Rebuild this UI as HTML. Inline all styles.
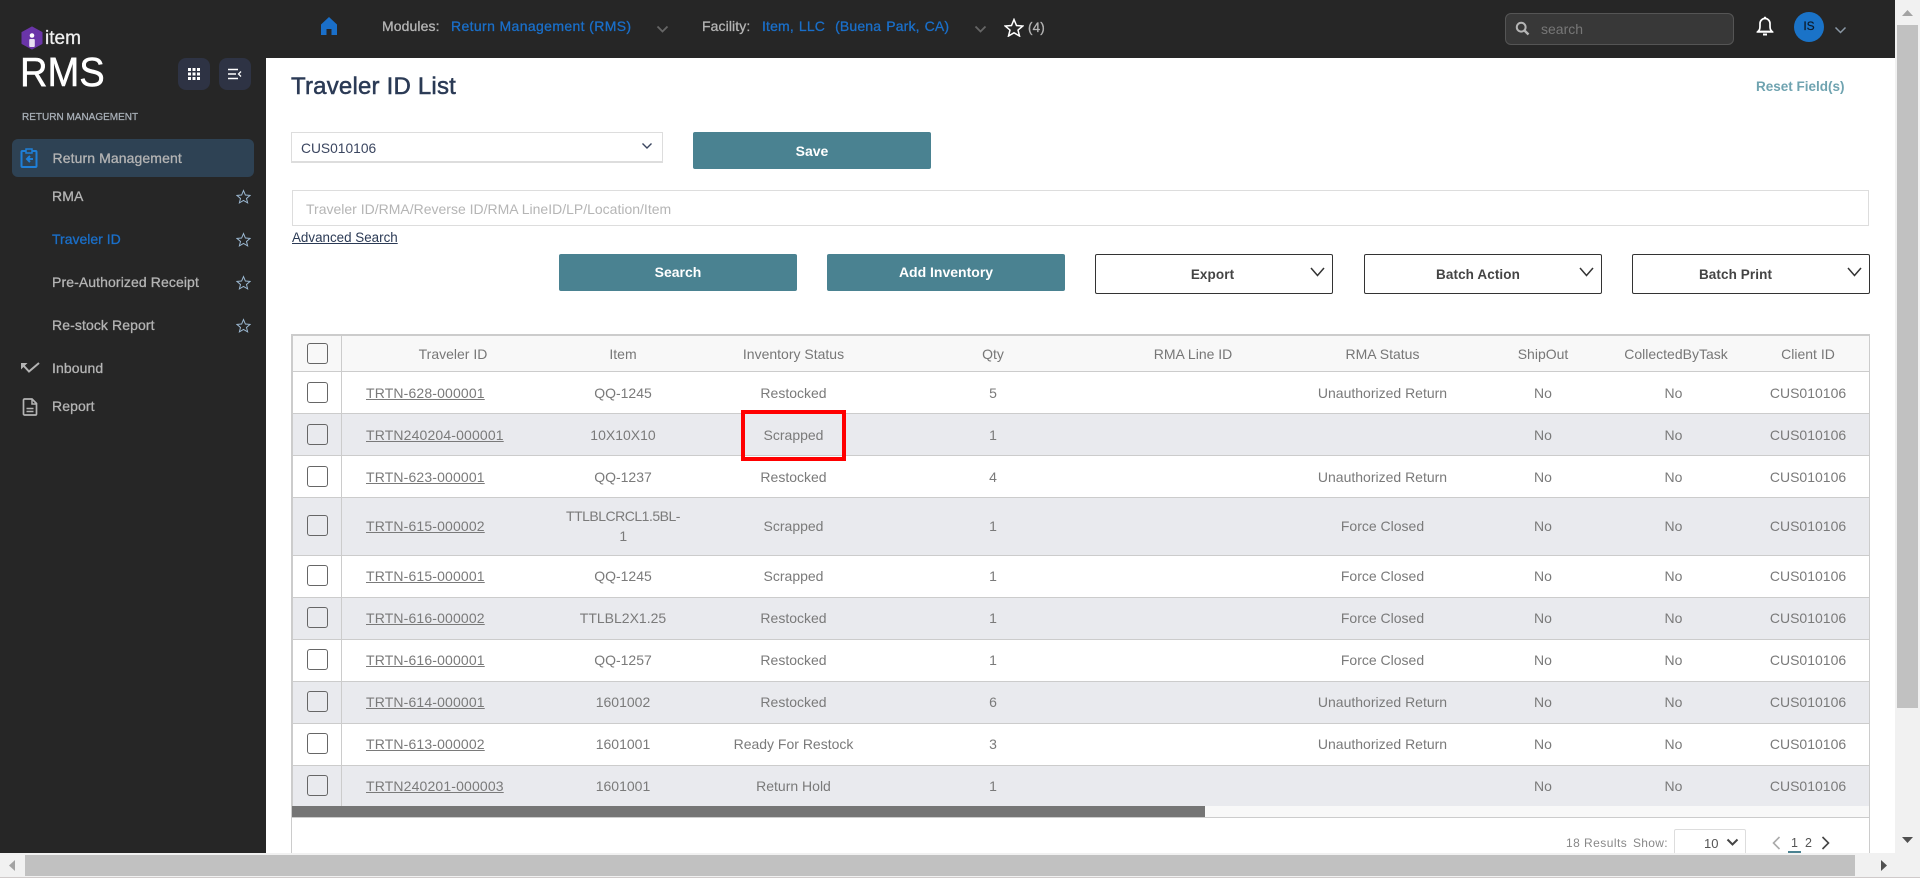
<!DOCTYPE html>
<html lang="en"><head><meta charset="utf-8"><title>Traveler ID List</title>
<style>
*{box-sizing:border-box}
html,body{margin:0;padding:0;width:1920px;height:878px;overflow:hidden;background:#fff;font-family:"Liberation Sans",sans-serif}
.a{position:absolute;white-space:nowrap;line-height:20px}
svg{position:absolute;display:block}
.nav{font-size:14px;color:#b4b4b4;-webkit-text-stroke:.3px #b4b4b4;letter-spacing:.1px}
.blue{color:#1a6fc9;-webkit-text-stroke:.3px #1a6fc9}
.tbtn{position:absolute;background:#2e3344;border-radius:8px;width:32px;height:32px;top:58px}
.btn{position:absolute;background:#4a8291;color:#fff;font-size:14px;font-weight:bold;text-align:center;border-radius:2px;line-height:37px;height:37px;top:254px;width:238px}
.dd{position:absolute;top:254px;height:40px;width:238px;border:1px solid #333;border-radius:2px;background:#fff;color:#444;font-size:13.5px;font-weight:bold;text-align:center;line-height:40px;letter-spacing:.1px}
table{position:absolute;left:291px;top:334px;width:1578px;border-collapse:separate;border-spacing:0;table-layout:fixed;font-size:14px;color:#7a7a7a;border-top:2px solid #ccc;border-left:2px solid #ccc;background:#fff}
th{font-weight:normal;background:#f8f8f8;height:36px;border-bottom:1px solid #ccc;text-align:center;padding:0;color:#777}
td{height:42px;border-bottom:1px solid #ccc;text-align:center;padding:0;line-height:20px}
tr.s td{background:#e9eaee}
tr.u td{padding-bottom:2px}
th:first-child,td:first-child{border-right:1px solid #ccc}
td.i{text-align:left;padding-left:24px;text-decoration:underline;letter-spacing:.15px}
td.w{padding-left:25px;padding-right:25px}
th:nth-child(2){padding-left:26px}
th:last-child,td:last-child{padding-right:5px}
td:nth-child(9){padding-right:5px}
.cb{display:block;width:21px;height:21px;border:1px solid #666;border-radius:3px;margin-left:14px;background:transparent}
.st{position:absolute;left:236px;width:15px;height:15px}
</style></head><body>

<!-- content frame -->
<div class="a" style="left:291px;top:73px;font-size:24px;line-height:28px;color:#2b3a55;-webkit-text-stroke:.5px #2b3a55;letter-spacing:.2px">Traveler ID List</div>
<div class="a" style="left:1756px;top:77px;font-size:13.5px;font-weight:bold;color:#6fa3b0">Reset Field(s)</div>

<div class="a" style="left:291px;top:132px;width:372px;height:31px;border:1px solid #ddd;border-bottom:2px solid #ddd;font-size:13.8px;color:#3b4660;padding-left:9px;line-height:31px">CUS010106</div>
<svg style="left:641px;top:142px" width="12" height="8" viewBox="0 0 12 8"><path d="M1.5 1.5 6 6l4.500-4.500" fill="none" stroke="#3b4660" stroke-width="1.400"/></svg>
<div class="btn" style="left:693px;top:132px;line-height:39px">Save</div>

<div class="a" style="left:292px;top:190px;width:1577px;height:36px;border:1px solid #ddd;font-size:14px;color:#b5b5b5;padding-left:13px;line-height:36px">Traveler ID/RMA/Reverse ID/RMA LineID/LP/Location/Item</div>
<div class="a" style="left:292px;top:228px;font-size:13.400px;color:#2b3a55;text-decoration:underline">Advanced Search</div>

<div class="btn" style="left:559px">Search</div>
<div class="btn" style="left:827px">Add Inventory</div>
<div class="dd" style="left:1095px;padding-right:3px">Export</div>
<div class="dd" style="left:1364px;padding-right:10px">Batch Action</div>
<div class="dd" style="left:1632px;padding-right:31px">Batch Print</div>
<svg style="left:1310px;top:267px" width="15" height="10" viewBox="0 0 15 10"><path d="M1 1l6.500 7.500L14 1" fill="none" stroke="#333" stroke-width="1.500"/></svg>
<svg style="left:1579px;top:267px" width="15" height="10" viewBox="0 0 15 10"><path d="M1 1l6.500 7.500L14 1" fill="none" stroke="#333" stroke-width="1.500"/></svg>
<svg style="left:1847px;top:267px" width="15" height="10" viewBox="0 0 15 10"><path d="M1 1l6.500 7.500L14 1" fill="none" stroke="#333" stroke-width="1.500"/></svg>

<table>
<colgroup><col style="width:49px"><col style="width:196px"><col style="width:170px"><col style="width:171px"><col style="width:228px"><col style="width:172px"><col style="width:207px"><col style="width:114px"><col style="width:152px"><col style="width:117px"></colgroup>
<tr><th><span class="cb"></span></th><th>Traveler ID</th><th>Item</th><th>Inventory Status</th><th>Qty</th><th>RMA Line ID</th><th>RMA Status</th><th>ShipOut</th><th>CollectedByTask</th><th>Client ID</th></tr>
<tr><td><span class="cb"></span></td><td class="i">TRTN-628-000001</td><td class="w">QQ-1245</td><td>Restocked</td><td>5</td><td></td><td>Unauthorized Return</td><td>No</td><td>No</td><td>CUS010106</td></tr>
<tr class="s"><td><span class="cb"></span></td><td class="i">TRTN240204-000001</td><td class="w">10X10X10</td><td>Scrapped</td><td>1</td><td></td><td></td><td>No</td><td>No</td><td>CUS010106</td></tr>
<tr><td style="height:41px"><span class="cb"></span></td><td class="i">TRTN-623-000001</td><td class="w">QQ-1237</td><td>Restocked</td><td>4</td><td></td><td>Unauthorized Return</td><td>No</td><td>No</td><td>CUS010106</td></tr>
<tr class="s u"><td style="height:58px"><span class="cb"></span></td><td class="i">TRTN-615-000002</td><td class="w" style="letter-spacing:-.5px">TTLBLCRCL1.5BL-1</td><td>Scrapped</td><td>1</td><td></td><td>Force Closed</td><td>No</td><td>No</td><td>CUS010106</td></tr>
<tr class="u"><td style="height:41px"><span class="cb"></span></td><td class="i">TRTN-615-000001</td><td class="w">QQ-1245</td><td>Scrapped</td><td>1</td><td></td><td>Force Closed</td><td>No</td><td>No</td><td>CUS010106</td></tr>
<tr class="s u"><td><span class="cb"></span></td><td class="i">TRTN-616-000002</td><td class="w">TTLBL2X1.25</td><td>Restocked</td><td>1</td><td></td><td>Force Closed</td><td>No</td><td>No</td><td>CUS010106</td></tr>
<tr class="u"><td><span class="cb"></span></td><td class="i">TRTN-616-000001</td><td class="w">QQ-1257</td><td>Restocked</td><td>1</td><td></td><td>Force Closed</td><td>No</td><td>No</td><td>CUS010106</td></tr>
<tr class="s u"><td><span class="cb"></span></td><td class="i">TRTN-614-000001</td><td class="w">1601002</td><td>Restocked</td><td>6</td><td></td><td>Unauthorized Return</td><td>No</td><td>No</td><td>CUS010106</td></tr>
<tr class="u"><td><span class="cb"></span></td><td class="i">TRTN-613-000002</td><td class="w">1601001</td><td>Ready For Restock</td><td>3</td><td></td><td>Unauthorized Return</td><td>No</td><td>No</td><td>CUS010106</td></tr>
<tr class="s u"><td><span class="cb"></span></td><td class="i">TRTN240201-000003</td><td class="w">1601001</td><td>Return Hold</td><td>1</td><td></td><td></td><td>No</td><td>No</td><td>CUS010106</td></tr>
</table>

<div class="a" style="left:291px;top:334px;width:1579px;height:520px;border-left:1px solid #ccc;border-right:1px solid #ccc"></div>
<div class="a" style="left:741px;top:410px;width:105px;height:51px;border:4px solid #f00"></div>

<!-- table scrollbar -->
<div class="a" style="left:292px;top:806px;width:1577px;height:12px;background:#f8f8f8;border-bottom:1px solid #ccc"></div>
<div class="a" style="left:292px;top:806px;width:913px;height:11px;background:#757575"></div>

<!-- pagination -->
<div class="a" style="left:1566px;top:833px;font-size:12px;color:#888;letter-spacing:.45px">18 Results</div>
<div class="a" style="left:1633px;top:833px;font-size:12px;color:#888;letter-spacing:.3px">Show:</div>
<div class="a" style="left:1674px;top:829px;width:72px;height:26px;border:1px solid #ddd;border-radius:2px;font-size:13px;color:#555;padding-left:29px;line-height:28px">10</div>
<svg style="left:1726px;top:838px" width="13" height="9" viewBox="0 0 13 9"><path d="M1.500 1.500 6.500 6.500l5-5" fill="none" stroke="#444" stroke-width="2"/></svg>
<svg style="left:1772px;top:836px" width="9" height="14" viewBox="0 0 9 14"><path d="M7.500 1 1.500 7l6 6" fill="none" stroke="#aaa" stroke-width="1.600"/></svg>
<div class="a" style="left:1791px;top:833px;font-size:12.500px;color:#555">1</div>
<div class="a" style="left:1805px;top:833px;font-size:12.500px;color:#555">2</div>
<div class="a" style="left:1788px;top:851px;width:13px;height:2px;background:#4a8291"></div>
<svg style="left:1821px;top:836px" width="9" height="14" viewBox="0 0 9 14"><path d="M1.500 1l6 6-6 6" fill="none" stroke="#444" stroke-width="1.600"/></svg>

<!-- top bar -->
<div class="a" style="left:0;top:0;width:1895px;height:58px;background:#262626"></div>
<svg style="left:320px;top:16px" width="18" height="20" viewBox="0 0 18 20"><path d="M9 1 17 8.500V19h-5.500v-6h-5v6H1V8.500z" fill="#1a6fc9"/></svg>
<div class="a nav" style="left:382px;top:16px">Modules:</div>
<div class="a blue" style="left:451px;top:16px;font-size:14px;letter-spacing:.37px">Return Management (RMS)</div>
<svg style="left:656px;top:25px" width="13" height="9" viewBox="0 0 13 9"><path d="M1.500 1.500 6.500 6.500l5-5" fill="none" stroke="#666" stroke-width="1.800"/></svg>
<div class="a nav" style="left:702px;top:16px">Facility:</div>
<div class="a blue" style="left:762px;top:16px;font-size:14px;word-spacing:1px;letter-spacing:.15px">Item, LLC &nbsp;(Buena Park, CA)</div>
<svg style="left:974px;top:25px" width="13" height="9" viewBox="0 0 13 9"><path d="M1.500 1.500 6.500 6.500l5-5" fill="none" stroke="#666" stroke-width="1.800"/></svg>
<svg style="left:1004px;top:18px" width="20" height="19" viewBox="0 0 20 19"><path d="M10 1.500 12.500 7.500 18.800 8 14 12.100 15.500 18 10 14.800 4.500 18 6 12.100 1.200 8 7.500 7.500z" fill="none" stroke="#fff" stroke-width="1.500"/></svg>
<div class="a nav" style="left:1028px;top:18px;font-size:13.500px">(4)</div>

<div class="a" style="left:1505px;top:13px;width:229px;height:32px;background:#383838;border:1px solid #555;border-radius:6px;font-size:14px;color:#777;padding-left:35px;line-height:30px">search</div>
<svg style="left:1515px;top:21px" width="15" height="15" viewBox="0 0 15 15"><circle cx="6.200" cy="6.200" r="4.400" fill="none" stroke="#b5b5b5" stroke-width="2"/><path d="M9.500 9.500 13.500 13.500" stroke="#b5b5b5" stroke-width="2.400"/></svg>
<svg style="left:1756px;top:15px" width="18" height="22" viewBox="0 0 18 22"><path d="M2 16.500c1.500-1.500 2-2.500 2-5.500V8.500a5 5 0 0 1 10 0V11c0 3 .5 4 2 5.500z" fill="none" stroke="#fff" stroke-width="1.700"/><path d="M1 17h16" stroke="#fff" stroke-width="1.500"/><circle cx="9" cy="2.800" r="1.200" fill="#fff"/><path d="M7 19.500h4" stroke="#fff" stroke-width="2"/></svg>
<div class="a" style="left:1794px;top:12px;width:30px;height:30px;border-radius:50%;background:#1a73c8;color:#0d1b2a;font-size:12px;text-align:center;line-height:28px;-webkit-text-stroke:.2px #0d1b2a">IS</div>
<svg style="left:1834px;top:26px" width="13" height="9" viewBox="0 0 13 9"><path d="M1.500 1.500 6.500 6.500l5-5" fill="none" stroke="#8a98a5" stroke-width="1.500"/></svg>

<!-- sidebar -->
<div class="a" style="left:0;top:0;width:266px;height:853px;background:#262626"></div>
<svg style="left:21px;top:26px" width="22" height="24" viewBox="0 0 22 24"><path d="M11 1 21 6.500V17.500L11 23 1 17.500V6.500z" fill="#6a35a8" stroke="#6a35a8" stroke-linejoin="round"/><circle cx="11" cy="9.500" r="2.300" fill="#fff"/><rect x="8.200" y="13" width="5.600" height="8" rx="1" fill="#e8e0f2"/></svg>
<div class="a" style="left:45px;top:29px;font-size:19px;color:#f0f0f0;-webkit-text-stroke:.3px #f0f0f0">item</div>
<div class="a" style="left:20px;top:50px;font-size:41px;line-height:44px;color:#fff;-webkit-text-stroke:.5px #fff;transform:scaleX(.93);transform-origin:0 0">RMS</div>
<div class="tbtn" style="left:178px"></div>
<svg style="left:188px;top:68px" width="12" height="12" viewBox="0 0 12 12" fill="#fff"><rect width="3" height="3"/><rect x="4.500" width="3" height="3"/><rect x="9" width="3" height="3"/><rect y="4.500" width="3" height="3"/><rect x="4.500" y="4.500" width="3" height="3"/><rect x="9" y="4.500" width="3" height="3"/><rect y="9" width="3" height="3"/><rect x="4.500" y="9" width="3" height="3"/><rect x="9" y="9" width="3" height="3"/></svg>
<div class="tbtn" style="left:219px"></div>
<svg style="left:228px;top:68px" width="14" height="12" viewBox="0 0 14 12"><path d="M0 1.500h10M0 6h8M0 10.500h10" stroke="#fff" stroke-width="1.600" fill="none"/><path d="M13 3.500 10.500 6 13 8.500" stroke="#fff" stroke-width="1.300" fill="none"/></svg>
<div class="a" style="left:22px;top:108px;font-size:10px;color:#a9b0b8;-webkit-text-stroke:.25px #a9b0b8">RETURN MANAGEMENT</div>

<div class="a" style="left:12px;top:139px;width:242px;height:38px;background:#2e4254;border-radius:6px"></div>
<svg style="left:20px;top:148px" width="18" height="20" viewBox="0 0 18 20"><path d="M6 3H2.500a1 1 0 0 0-1 1v14a1 1 0 0 0 1 1h13a1 1 0 0 0 1-1V4a1 1 0 0 0-1-1H12" fill="none" stroke="#1f7fd8" stroke-width="2"/><rect x="6" y="1" width="6" height="4" fill="none" stroke="#1f7fd8" stroke-width="1.500"/><path d="M13 11H8M10 8 7 11l3 3" fill="none" stroke="#1f7fd8" stroke-width="2"/></svg>
<div class="a nav" style="left:52.500px;top:148px">Return Management</div>
<div class="a nav" style="left:52px;top:186px">RMA</div>
<div class="a blue" style="left:52px;top:229px;font-size:14px">Traveler ID</div>
<div class="a nav" style="left:52px;top:272px">Pre-Authorized Receipt</div>
<div class="a nav" style="left:52px;top:315px">Re-stock Report</div>
<svg class="st" style="top:189px" viewBox="0 0 20 19"><path d="M10 1.500 12.500 7.500 18.800 8 14 12.100 15.500 18 10 14.800 4.500 18 6 12.100 1.200 8 7.500 7.500z" fill="none" stroke="#9dbad4" stroke-width="1.300"/></svg>
<svg class="st" style="top:232px" viewBox="0 0 20 19"><path d="M10 1.500 12.500 7.500 18.800 8 14 12.100 15.500 18 10 14.800 4.500 18 6 12.100 1.200 8 7.500 7.500z" fill="none" stroke="#9dbad4" stroke-width="1.300"/></svg>
<svg class="st" style="top:275px" viewBox="0 0 20 19"><path d="M10 1.500 12.500 7.500 18.800 8 14 12.100 15.500 18 10 14.800 4.500 18 6 12.100 1.200 8 7.500 7.500z" fill="none" stroke="#9dbad4" stroke-width="1.300"/></svg>
<svg class="st" style="top:318px" viewBox="0 0 20 19"><path d="M10 1.500 12.500 7.500 18.800 8 14 12.100 15.500 18 10 14.800 4.500 18 6 12.100 1.200 8 7.500 7.500z" fill="none" stroke="#9dbad4" stroke-width="1.300"/></svg>
<svg style="left:20px;top:362px" width="20" height="12" viewBox="0 0 20 12"><path d="M3 3 9 9.500 19 1" fill="none" stroke="#b4b4b4" stroke-width="2"/><path d="M1 1h6.500L1 7.500z" fill="#b4b4b4"/></svg>
<div class="a nav" style="left:52px;top:358px">Inbound</div>
<svg style="left:22px;top:398px" width="16" height="18" viewBox="0 0 16 18"><path d="M2.500 1H10l4.500 4.500V16a1 1 0 0 1-1 1h-11a1 1 0 0 1-1-1V2a1 1 0 0 1 1-1z" fill="none" stroke="#b4b4b4" stroke-width="1.700"/><path d="M10 1v5h4.500M4.500 10.500h7M4.500 13.500h7" fill="none" stroke="#b4b4b4" stroke-width="1.500"/></svg>
<div class="a nav" style="left:52px;top:396px">Report</div>

<!-- browser scrollbars -->
<div class="a" style="left:1895px;top:0;width:25px;height:853px;background:#f1f1f1"></div>
<div class="a" style="left:1897px;top:25px;width:21px;height:683px;background:#c1c1c1"></div>
<svg style="left:1901px;top:9px" width="13" height="8" viewBox="0 0 13 8"><path d="M6.500 1 12 7H1z" fill="#a3a3a3"/></svg>
<svg style="left:1901px;top:836px" width="13" height="8" viewBox="0 0 13 8"><path d="M1 1h11L6.500 7z" fill="#505050"/></svg>
<div class="a" style="left:0;top:853px;width:1920px;height:25px;background:#f1f1f1"></div>
<div class="a" style="left:25px;top:855px;width:1830px;height:21px;background:#c1c1c1"></div>
<svg style="left:8px;top:859px" width="8" height="13" viewBox="0 0 8 13"><path d="M7 1v11L1 6.500z" fill="#a3a3a3"/></svg>
<svg style="left:1880px;top:859px" width="8" height="13" viewBox="0 0 8 13"><path d="M1 1v11l6-5.500z" fill="#505050"/></svg>
<div class="a" style="left:0;top:877px;width:1920px;height:1px;background:#cfcaca"></div>
</body></html>
